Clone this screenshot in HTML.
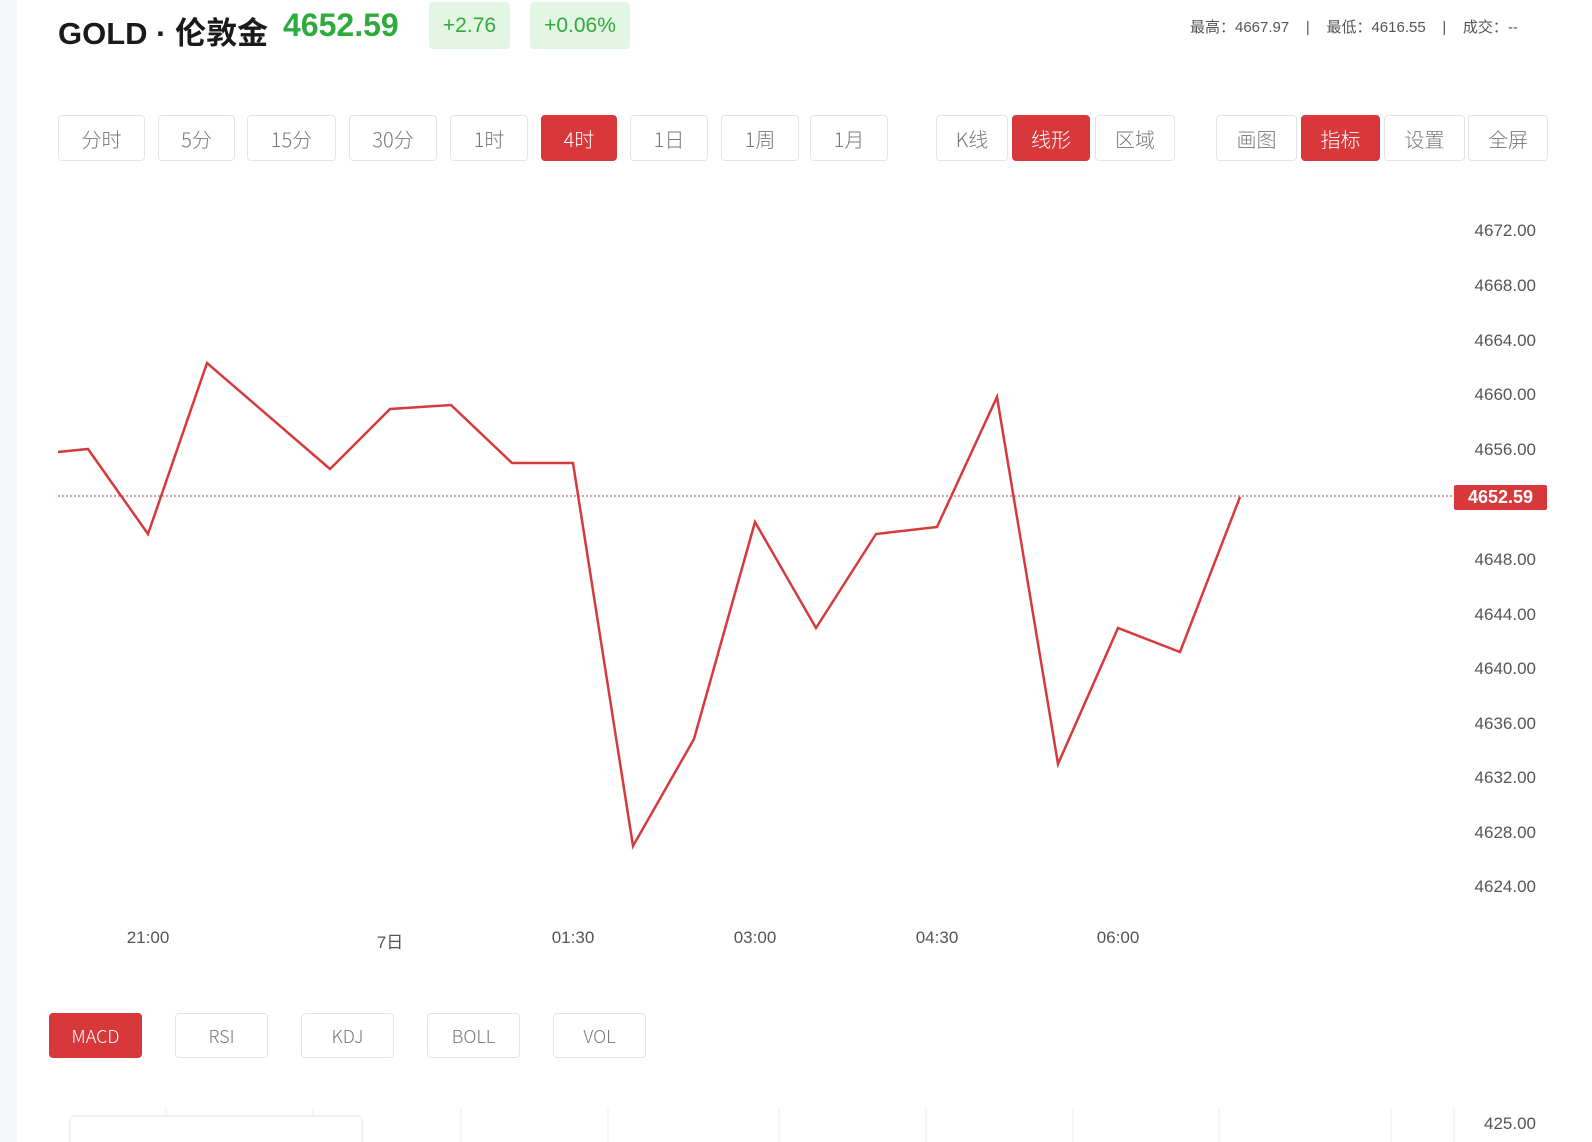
<!DOCTYPE html>
<html><head><meta charset="utf-8"><style>
*{margin:0;padding:0;box-sizing:border-box}
body{width:1592px;height:1142px;overflow:hidden;background:#fff;font-family:"Liberation Sans","Noto Sans CJK SC",sans-serif;position:relative}
.strip{position:absolute;left:0;top:0;width:17px;height:1142px;background:#f5f7fa}
.a{position:absolute}
.btn{position:absolute;border:1px solid #e4e4e4;border-radius:4px;background:#fff;color:#777;font-size:20px;display:flex;align-items:center;justify-content:center;font-family:"Noto Sans CJK SC","Liberation Sans",sans-serif;font-weight:300}
.on{background:#d9383a;border-color:#d9383a;color:#fff}
.yl{position:absolute;left:1460px;width:76px;text-align:right;font-size:17px;color:#555}
.xl{position:absolute;top:928px;font-size:17px;color:#555;transform:translateX(-50%)}
.ib{top:1013px;height:45px;width:93px;font-size:18px}
</style></head><body>
<div class="strip"></div>
<div class="a" style="left:58px;top:8px;font-size:31px;font-weight:bold;color:#1a1a1a;font-family:'Liberation Sans','Noto Sans CJK SC',sans-serif">GOLD · 伦敦金</div>
<div class="a" style="left:283px;top:7px;font-size:32px;font-weight:bold;color:#2eab3c">4652.59</div>
<div class="a" style="left:429px;top:2px;width:81px;height:47px;background:#e3f5e3;border-radius:4px;color:#2eab3c;font-size:21px;display:flex;align-items:center;justify-content:center">+2.76</div>
<div class="a" style="left:530px;top:2px;width:100px;height:47px;background:#e3f5e3;border-radius:4px;color:#2eab3c;font-size:21px;display:flex;align-items:center;justify-content:center">+0.06%</div>
<div class="a" style="left:1190px;top:16px;font-size:15px;color:#555;white-space:pre;font-family:'Liberation Sans','Noto Sans CJK SC',sans-serif">最高：4667.97    |    最低：4616.55    |    成交：--</div>

<div class="btn" style="left:58px;top:115px;width:87px;height:46px">分时</div>
<div class="btn" style="left:158px;top:115px;width:77px;height:46px">5分</div>
<div class="btn" style="left:247px;top:115px;width:89px;height:46px">15分</div>
<div class="btn" style="left:349px;top:115px;width:88px;height:46px">30分</div>
<div class="btn" style="left:450px;top:115px;width:78px;height:46px">1时</div>
<div class="btn on" style="left:541px;top:115px;width:76px;height:46px">4时</div>
<div class="btn" style="left:630px;top:115px;width:78px;height:46px">1日</div>
<div class="btn" style="left:721px;top:115px;width:78px;height:46px">1周</div>
<div class="btn" style="left:810px;top:115px;width:78px;height:46px">1月</div>
<div class="btn" style="left:936px;top:115px;width:72px;height:46px">K线</div>
<div class="btn on" style="left:1012px;top:115px;width:78px;height:46px">线形</div>
<div class="btn" style="left:1095px;top:115px;width:80px;height:46px">区域</div>
<div class="btn" style="left:1216px;top:115px;width:81px;height:46px">画图</div>
<div class="btn on" style="left:1301px;top:115px;width:79px;height:46px">指标</div>
<div class="btn" style="left:1384px;top:115px;width:81px;height:46px">设置</div>
<div class="btn" style="left:1468px;top:115px;width:80px;height:46px">全屏</div>

<svg class="a" style="left:0;top:0" width="1592" height="1142">
<line x1="58" y1="496" x2="1454" y2="496" stroke="#c0393b" stroke-width="1" stroke-dasharray="2,2"/>
<polyline fill="none" stroke="#d63a3c" stroke-width="2.5" stroke-linejoin="miter" points="58,452 88,449 148,534 207,363 330,469 390,409 451,405 512,463 573,463 633,846 694,739 755,522 816,628 876,534 937,527 997,397 1058,764 1118,628 1180,652 1240,497"/>
<g stroke="#eee" stroke-width="1">
<line x1="166" y1="1108" x2="166" y2="1142"/><line x1="313" y1="1108" x2="313" y2="1142"/><line x1="461" y1="1108" x2="461" y2="1142"/><line x1="608" y1="1108" x2="608" y2="1142"/><line x1="779" y1="1108" x2="779" y2="1142"/><line x1="926" y1="1108" x2="926" y2="1142"/><line x1="1073" y1="1108" x2="1073" y2="1142"/><line x1="1219" y1="1108" x2="1219" y2="1142"/><line x1="1391" y1="1108" x2="1391" y2="1142"/><line x1="1454" y1="1108" x2="1454" y2="1142"/>
</g>
<rect x="70" y="1116" width="292" height="40" rx="4" fill="#fff" stroke="#e6e6e6"/>
</svg>

<div class="yl" style="top:221px">4672.00</div>
<div class="yl" style="top:276px">4668.00</div>
<div class="yl" style="top:331px">4664.00</div>
<div class="yl" style="top:385px">4660.00</div>
<div class="yl" style="top:440px">4656.00</div>
<div class="yl" style="top:550px">4648.00</div>
<div class="yl" style="top:605px">4644.00</div>
<div class="yl" style="top:659px">4640.00</div>
<div class="yl" style="top:714px">4636.00</div>
<div class="yl" style="top:768px">4632.00</div>
<div class="yl" style="top:823px">4628.00</div>
<div class="yl" style="top:877px">4624.00</div>
<div class="a" style="left:1454px;top:485px;width:93px;height:25px;background:#d9383a;border-radius:2px;color:#fff;font-size:18px;font-weight:bold;display:flex;align-items:center;justify-content:center">4652.59</div>
<div class="yl" style="top:1114px">425.00</div>

<div class="xl" style="left:148px">21:00</div>
<div class="xl" style="left:390px;font-family:'Liberation Sans','Noto Sans CJK SC',sans-serif">7日</div>
<div class="xl" style="left:573px">01:30</div>
<div class="xl" style="left:755px">03:00</div>
<div class="xl" style="left:937px">04:30</div>
<div class="xl" style="left:1118px">06:00</div>

<div class="btn ib on" style="left:49px">MACD</div>
<div class="btn ib" style="left:175px">RSI</div>
<div class="btn ib" style="left:301px">KDJ</div>
<div class="btn ib" style="left:427px">BOLL</div>
<div class="btn ib" style="left:553px">VOL</div>
</body></html>
